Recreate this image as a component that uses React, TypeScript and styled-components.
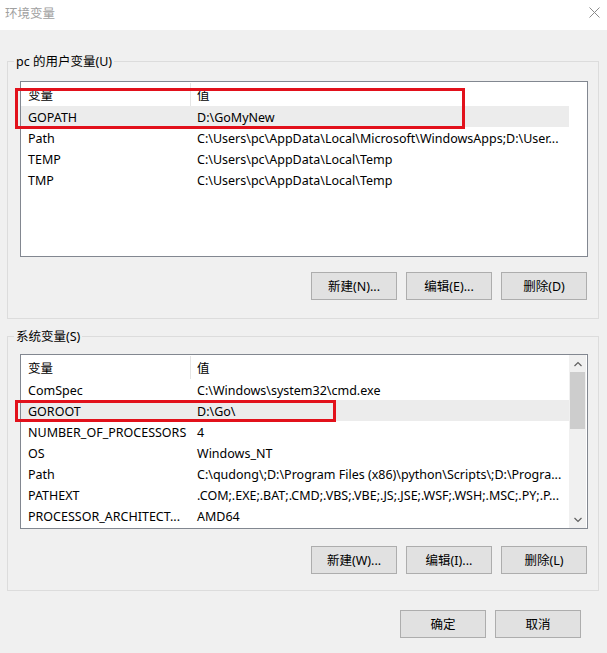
import React from "react";
import styled, { createGlobalStyle } from "styled-components";

const GlobalStyle = createGlobalStyle`
  html, body { margin: 0; padding: 0; background: #f0f0f0; }
  body {
    font-family: "Noto Sans", "Noto Sans CJK SC", sans-serif;
    font-size: 12.5px;
    color: #000;
  }
  * { box-sizing: border-box; }
`;

const Window = styled.div`
  width: 607px;
  height: 653px;
  background: #f0f0f0;
  display: flex;
  flex-direction: column;
  overflow: hidden;
`;

const TitleBar = styled.div`
  height: 30px;
  flex: none;
  background: #ffffff;
  display: flex;
  align-items: center;
  justify-content: space-between;
  padding: 0 6px 5px 5px;
`;

const Title = styled.span`
  color: #a0a0a0;
  font-size: 12.5px;
`;

const CloseIcon = styled.svg`
  width: 11px;
  height: 11px;
  margin-right: 1px;
`;

const Group = styled.section<{ $top: number; $bottom: number }>`
  margin: ${(p) => p.$top}px 8px 0 7px;
  border: 1px solid #dcdcdc;
  padding: 0 11px ${(p) => p.$bottom}px 12px;
`;

const Legend = styled.div`
  width: fit-content;
  margin: -8px 0 0 -6px;
  padding: 0 2px;
  line-height: 16px;
  background: #f0f0f0;
`;

const List = styled.div<{ $mt: number; $h: number }>`
  position: relative;
  margin-top: ${(p) => p.$mt}px;
  margin-right: -1px;
  height: ${(p) => p.$h}px;
  border: 1px solid #828790;
  background: #ffffff;
  display: flex;
`;

const Columns = styled.div`
  width: 548px;
  flex: none;
  overflow: hidden;
`;

const HeaderRow = styled.div`
  display: flex;
  height: 24px;
  align-items: stretch;
`;

const HeaderCell = styled.div<{ $first?: boolean }>`
  width: ${(p) => (p.$first ? "170px" : "378px")};
  padding-left: ${(p) => (p.$first ? "7px" : "6px")};
  border-right: ${(p) => (p.$first ? "1px solid #e5e5e5" : "none")};
  display: flex;
  align-items: center;
  margin-top: 1px;
`;

const Row = styled.div<{ $selected?: boolean }>`
  display: flex;
  height: 21px;
  align-items: center;
  padding-top: 1px;
  background: ${(p) => (p.$selected ? "#ececec" : "transparent")};
`;

const Cell = styled.div<{ $first?: boolean }>`
  width: ${(p) => (p.$first ? "170px" : "378px")};
  padding-left: ${(p) => (p.$first ? "7px" : "6px")};
  white-space: nowrap;
  overflow: hidden;
`;

const ScrollBar = styled.div`
  width: 17px;
  flex: none;
  background: #f0f0f0;
  display: flex;
  flex-direction: column;
`;

const ScrollArrow = styled.div`
  height: 17px;
  display: flex;
  align-items: center;
  justify-content: center;
`;

const ScrollTrack = styled.div`
  flex: 1;
  padding: 0 1px;
`;

const Thumb = styled.div`
  height: 57px;
  background: #cdcdcd;
`;

const Marker = styled.div<{ $l: number; $t: number; $w: number; $h: number }>`
  position: absolute;
  left: ${(p) => p.$l}px;
  top: ${(p) => p.$t}px;
  width: ${(p) => p.$w}px;
  height: ${(p) => p.$h}px;
  border: 3px solid #e2111b;
  z-index: 2;
  pointer-events: none;
`;

const ButtonRow = styled.div<{ $mt: number; $gap: number; $pr?: number }>`
  display: flex;
  justify-content: flex-end;
  gap: ${(p) => p.$gap}px;
  margin-top: ${(p) => p.$mt}px;
  padding-right: ${(p) => p.$pr ?? 0}px;
`;

const Button = styled.button`
  width: 86px;
  height: 28px;
  background: #e1e1e1;
  border: 1px solid #adadad;
  font-family: "Noto Sans", "Noto Sans CJK SC", sans-serif;
  font-size: 12.5px;
  color: #000;
  padding: 0 0 1px;
  cursor: default;
`;

type Item = { name: string; value: string; selected?: boolean };

const userVars: Item[] = [
  { name: "GOPATH", value: "D:\\GoMyNew", selected: true },
  { name: "Path", value: "C:\\Users\\pc\\AppData\\Local\\Microsoft\\WindowsApps;D:\\User..." },
  { name: "TEMP", value: "C:\\Users\\pc\\AppData\\Local\\Temp" },
  { name: "TMP", value: "C:\\Users\\pc\\AppData\\Local\\Temp" },
];

const sysVars: Item[] = [
  { name: "ComSpec", value: "C:\\Windows\\system32\\cmd.exe" },
  { name: "GOROOT", value: "D:\\Go\\", selected: true },
  { name: "NUMBER_OF_PROCESSORS", value: "4" },
  { name: "OS", value: "Windows_NT" },
  { name: "Path", value: "C:\\qudong\\;D:\\Program Files (x86)\\python\\Scripts\\;D:\\Progra..." },
  { name: "PATHEXT", value: ".COM;.EXE;.BAT;.CMD;.VBS;.VBE;.JS;.JSE;.WSF;.WSH;.MSC;.PY;.P..." },
  { name: "PROCESSOR_ARCHITECT...", value: "AMD64" },
];

const Chevron = ({ up }: { up?: boolean }) => (
  <svg width="8" height="6" viewBox="0 0 8 6">
    <polyline
      points={up ? "0.5,5 4,1.5 7.5,5" : "0.5,1 4,4.5 7.5,1"}
      fill="none"
      stroke="#606060"
      strokeWidth="1.2"
    />
  </svg>
);

const VarTable = ({ items }: { items: Item[] }) => (
  <Columns>
    <HeaderRow>
      <HeaderCell $first>变量</HeaderCell>
      <HeaderCell>值</HeaderCell>
    </HeaderRow>
    {items.map((it) => (
      <Row key={it.name + it.value} $selected={it.selected}>
        <Cell $first>{it.name}</Cell>
        <Cell>{it.value}</Cell>
      </Row>
    ))}
  </Columns>
);

export default function App() {
  return (
    <>
      <GlobalStyle />
      <Window>
        <TitleBar>
          <Title>环境变量</Title>
          <CloseIcon viewBox="0 0 11 11">
            <line x1="0.5" y1="0.5" x2="10.5" y2="10.5" stroke="#8a8a8a" strokeWidth="1" />
            <line x1="10.5" y1="0.5" x2="0.5" y2="10.5" stroke="#8a8a8a" strokeWidth="1" />
          </CloseIcon>
        </TitleBar>

        <Group $top={31} $bottom={18}>
          <Legend>pc 的用户变量(U)</Legend>
          <List $mt={11} $h={176}>
            <VarTable items={userVars} />
            <Marker $l={-6} $t={6} $w={450} $h={41} />
          </List>
          <ButtonRow $mt={15} $gap={9}>
            <Button>新建(N)...</Button>
            <Button>编辑(E)...</Button>
            <Button>删除(D)</Button>
          </ButtonRow>
        </Group>

        <Group $top={17} $bottom={16}>
          <Legend>系统变量(S)</Legend>
          <List $mt={9} $h={175}>
            <VarTable items={sysVars} />
            <ScrollBar>
              <ScrollArrow>
                <Chevron up />
              </ScrollArrow>
              <ScrollTrack>
                <Thumb />
              </ScrollTrack>
              <ScrollArrow>
                <Chevron />
              </ScrollArrow>
            </ScrollBar>
            <Marker $l={-6} $t={45} $w={321} $h={22} />
          </List>
          <ButtonRow $mt={17} $gap={9}>
            <Button>新建(W)...</Button>
            <Button>编辑(I)...</Button>
            <Button>删除(L)</Button>
          </ButtonRow>
        </Group>

        <ButtonRow $mt={19} $gap={9} $pr={26}>
          <Button>确定</Button>
          <Button>取消</Button>
        </ButtonRow>
      </Window>
    </>
  );
}
